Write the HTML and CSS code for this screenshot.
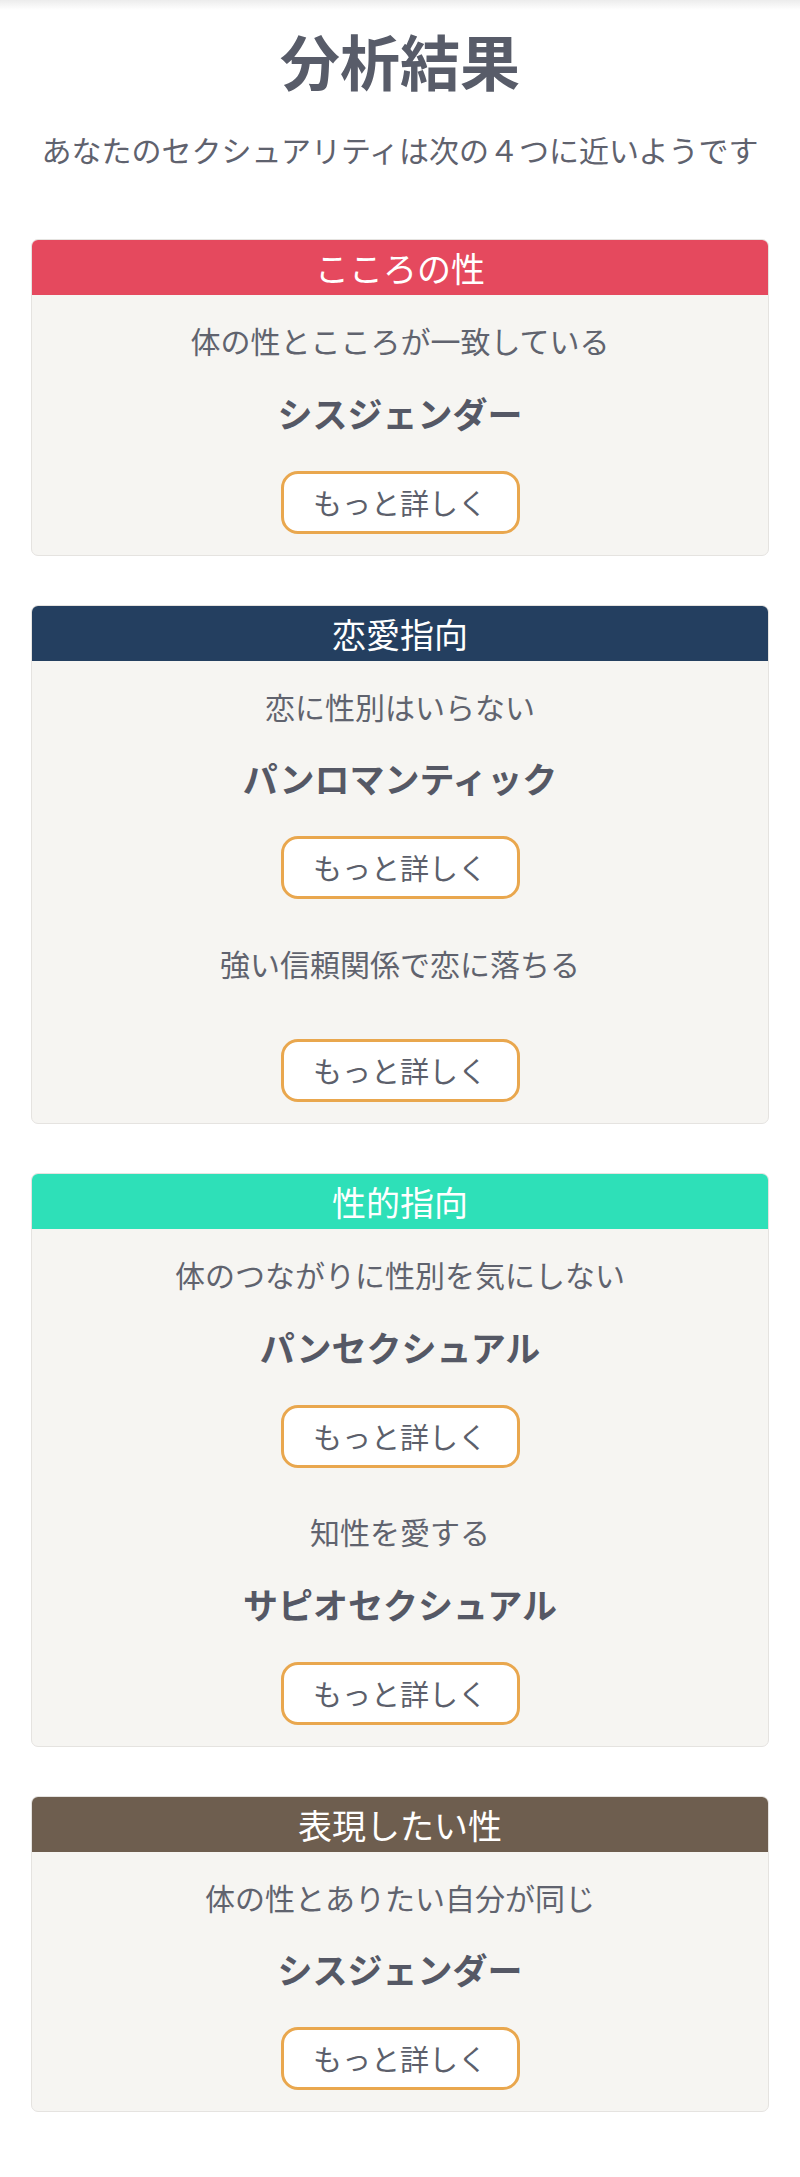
FILE: index.html
```html
<!DOCTYPE html>
<html lang="ja">
<head>
<meta charset="utf-8">
<title>分析結果</title>
<link rel="stylesheet" href="styles.css">
</head>
<body>
<div class="shade"></div>
<main class="page">
  <h1 class="title">分析結果</h1>
  <p class="lead">あなたのセクシュアリティは次の４つに近いようです</p>

  <section class="card">
    <h2 class="card-head head-red">こころの性</h2>
    <div class="card-body">
      <div class="item">
        <p class="desc">体の性とこころが一致している</p>
        <p class="name">シスジェンダー</p>
        <a class="more">もっと詳しく</a>
      </div>
    </div>
  </section>

  <section class="card">
    <h2 class="card-head head-navy">恋愛指向</h2>
    <div class="card-body">
      <div class="item">
        <p class="desc">恋に性別はいらない</p>
        <p class="name">パンロマンティック</p>
        <a class="more">もっと詳しく</a>
      </div>
      <div class="item">
        <p class="desc">強い信頼関係で恋に落ちる</p>
        <p class="name"></p>
        <a class="more">もっと詳しく</a>
      </div>
    </div>
  </section>

  <section class="card">
    <h2 class="card-head head-teal">性的指向</h2>
    <div class="card-body">
      <div class="item">
        <p class="desc">体のつながりに性別を気にしない</p>
        <p class="name">パンセクシュアル</p>
        <a class="more">もっと詳しく</a>
      </div>
      <div class="item">
        <p class="desc">知性を愛する</p>
        <p class="name">サピオセクシュアル</p>
        <a class="more">もっと詳しく</a>
      </div>
    </div>
  </section>

  <section class="card">
    <h2 class="card-head head-brown">表現したい性</h2>
    <div class="card-body">
      <div class="item">
        <p class="desc">体の性とありたい自分が同じ</p>
        <p class="name">シスジェンダー</p>
        <a class="more">もっと詳しく</a>
      </div>
    </div>
  </section>
</main>
</body>
</html>
```

FILE: styles.css
```css
html, body {
  margin: 0;
  padding: 0;
  background: #ffffff;
}

body {
  font-family: "Noto Sans CJK JP", "Noto Sans", sans-serif;
  color: #5c5f6b;
  position: relative;
}

.shade {
  position: absolute;
  left: 0;
  right: 0;
  top: 0;
  height: 10px;
  background: linear-gradient(#ececec, rgba(255,255,255,0));
}

.page {
  padding: 0 31px 40px;
  display: flex;
  flex-direction: column;
}

.title {
  margin: 0;
  padding-top: 18px;
  font-size: 60px;
  line-height: 84px;
  font-weight: 700;
  text-align: center;
  color: #585c69;
}

.lead {
  margin: 25px 0 0;
  font-size: 30px;
  line-height: 45px;
  text-align: center;
  color: #5f626e;
}

.card {
  margin-top: 67px;
  background: #f6f5f2;
  border: 1px solid #e5e3e0;
  border-radius: 7px;
  overflow: hidden;
}

.card + .card {
  margin-top: 49px;
}

.card-head {
  margin: 0;
  height: 55px;
  line-height: 55px;
  font-size: 34px;
  font-weight: 400;
  color: #ffffff;
  text-align: center;
}

.head-red { background: #e5495e; }
.head-navy { background: #243f60; }
.head-teal { background: #2ee0b8; }
.head-brown { background: #6e5e4f; }

.card-body {
  padding: 23px 0 21px;
  display: flex;
  flex-direction: column;
  gap: 41.5px;
}

.item {
  display: flex;
  flex-direction: column;
  align-items: center;
}

.desc {
  margin: 0 0 22.5px;
  font-size: 30px;
  line-height: 45px;
  color: #60636e;
  text-align: center;
}

.name {
  margin: 0 0 31px;
  font-size: 35px;
  line-height: 54px;
  font-weight: 700;
  color: #555865;
  text-align: center;
}

.more {
  display: block;
  box-sizing: border-box;
  width: 239px;
  height: 63px;
  line-height: 57px;
  border: 3px solid #e9a74e;
  border-radius: 17px;
  background: #ffffff;
  font-size: 29px;
  color: #5c5f6b;
  text-align: center;
}
```
